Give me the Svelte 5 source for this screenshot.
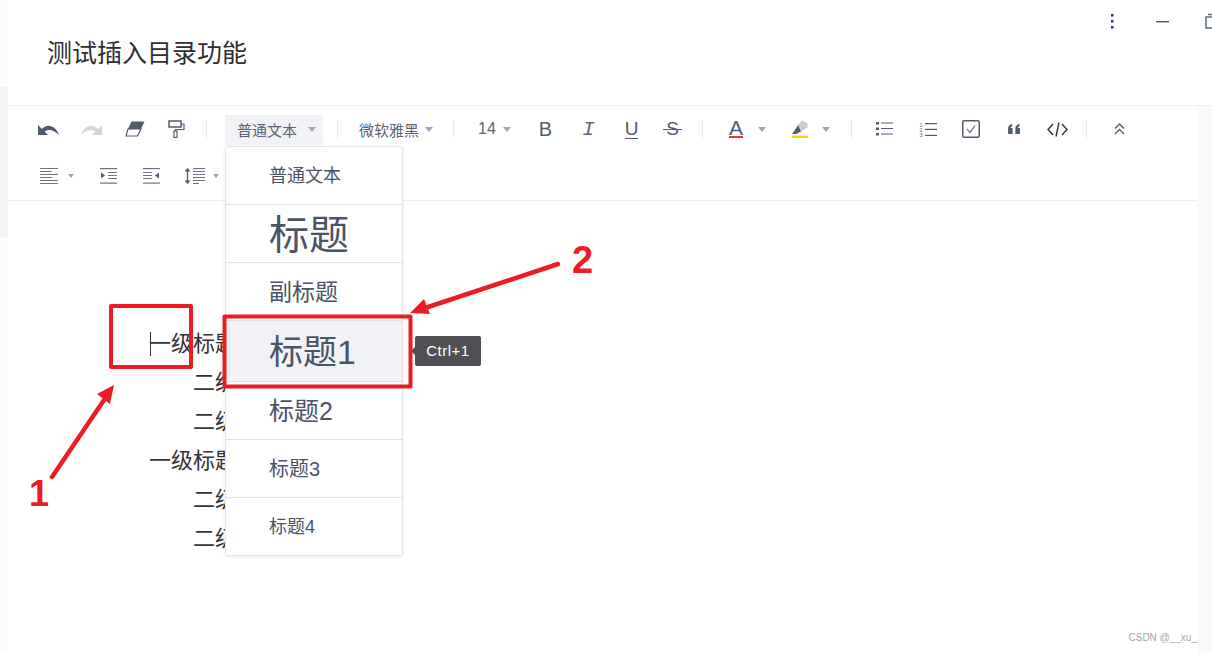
<script lang="ts">
  // 编辑器工具栏 + 段落样式下拉菜单
  const outline = [
    { text: "一级标题", child: false, caret: true },
    { text: "二级标题", child: true },
    { text: "二级标题", child: true },
    { text: "一级标题", child: false },
    { text: "二级标题", child: true },
    { text: "二级标题", child: true },
  ];

  const styles = [
    { label: "普通文本", cls: "s-body" },
    { label: "标题", cls: "s-title" },
    { label: "副标题", cls: "s-sub" },
    { label: "标题1", cls: "s-h1", active: true, tip: "Ctrl+1" },
    { label: "标题2", cls: "s-h2" },
    { label: "标题3", cls: "s-h3" },
    { label: "标题4", cls: "s-h4" },
  ];
</script>

<div class="page">
  <div class="rail-left">
    <div class="seg-a"></div>
    <div class="seg-b"></div>
    <div class="seg-c"></div>
  </div>

  <div class="main">
    <header class="head">
      <h1 class="doc-title">测试插入目录功能</h1>
      <div class="win-controls">
        <svg class="kebab" width="4" height="16" viewBox="0 0 4 16"><rect x="1" y="1" width="2.500" height="2.500" fill="#2b3566"/><rect x="1" y="7" width="2.500" height="2.500" fill="#2b3566"/><rect x="1" y="13" width="2.500" height="2.500" fill="#2b3566"/></svg>
        <svg class="minimize" width="13" height="2" viewBox="0 0 13 2"><rect width="13" height="1.400" fill="#4d5a70"/></svg>
        <svg class="restore" width="16" height="16" viewBox="0 0 16 16"><path d="M1 4h14v11H1zM3 1.500h10" fill="none" stroke="#5d6a80" stroke-width="1.500"/></svg>
      </div>
    </header>

    <div class="under">
      <div class="editor">
        <div class="toolbar">
          <div class="row row-top">
            <span class="tool">
              <svg width="21" height="11" viewBox="0 0 20 10.500"><path d="M0 1V10.500H9.500L6.200 7.200C9.500 4.800 14.500 4.800 20 10.500C17.500 3 10 -1.500 3.800 4.700Z" fill="#515a6e"/></svg>
            </span>
            <span class="tool">
              <svg width="21" height="11" viewBox="0 0 20 10.500"><path d="M20 1V10.500H10.500L13.800 7.200C10.500 4.800 5.500 4.800 0 10.500C2.500 3 10 -1.500 16.200 4.700Z" fill="#d4d5d8"/></svg>
            </span>
            <span class="tool">
              <svg width="20" height="16" viewBox="0 0 20 16"><path d="M6.500 0.500H19.500L16 8H3Z" fill="#515a6e"/><path d="M3 8H16L12.500 15H1Z" fill="none" stroke="#515a6e" stroke-width="1.200"/></svg>
            </span>
            <span class="tool paint">
              <svg width="17" height="18" viewBox="0 0 17 18"><rect x="1" y="1" width="12" height="6" fill="none" stroke="#515a6e" stroke-width="1.500"/><path d="M13 4H16V9.500H7.500V11" fill="none" stroke="#515a6e" stroke-width="1.200"/><rect x="6" y="11" width="3" height="6.500" fill="none" stroke="#515a6e" stroke-width="1.200"/></svg>
            </span>
            <i class="sep sep-a"></i>
            <span class="select">
              普通文本<i class="caret-down"></i>
              <div class="menu">
                {#each styles as s}
                  <div class="menu-item {s.cls}" class:active={s.active}>
                    {s.label}
                    {#if s.tip}<span class="tip">{s.tip}</span>{/if}
                  </div>
                {/each}
              </div>
            </span>
            <i class="sep sep-b"></i>
            <span class="font-pick">微软雅黑<i class="caret-down"></i></span>
            <i class="sep sep-c"></i>
            <span class="size-pick">14<i class="caret-down"></i></span>
            <span class="tool glyph first-format"><span class="g-b">B</span></span>
            <span class="tool glyph"><em class="g-i">I</em></span>
            <span class="tool glyph"><span class="g-u">U</span></span>
            <span class="tool glyph strike"><span class="g-s">S</span></span>
            <i class="sep sep-d"></i>
            <span class="color-pick"><span class="g-a">A</span><i class="caret-down"></i></span>
            <span class="marker-pick">
              <svg width="16" height="18" viewBox="0 0 16 18"><path d="M6 5L10 0.500L15.500 3V7.500L9 11.500Z" fill="#c9ccd3"/><path d="M6 5L9 11.500L4 14H0L3 10Z" fill="#515a6e"/><rect y="15.500" width="16" height="2.500" fill="#f5dc10"/></svg>
              <i class="caret-down"></i>
            </span>
            <i class="sep sep-e"></i>
            <span class="tool first-list">
              <svg width="17" height="14" viewBox="0 0 17 14"><g fill="#515a6e"><rect y="0" width="3" height="2.500"/><rect y="5.500" width="3" height="2.500"/><rect y="11" width="3" height="2.500"/><rect x="5" y="0.500" width="12" height="1"/><rect x="5" y="6" width="12" height="1"/><rect x="5" y="11.500" width="12" height="1"/></g></svg>
            </span>
            <span class="tool">
              <svg width="18" height="15" viewBox="0 0 18 15"><g fill="#515a6e"><rect x="6" y="1" width="12" height="1.200"/><rect x="6" y="6.800" width="12" height="1.200"/><rect x="6" y="12.800" width="12" height="1.200"/></g><g font-size="5.500" font-family="Liberation Sans, sans-serif" fill="#515a6e"><text x="0.500" y="4.500">1</text><text x="0.500" y="10">2</text><text x="0.500" y="15">3</text></g></svg>
            </span>
            <span class="tool">
              <svg width="18" height="18" viewBox="0 0 18 18"><rect x="0.750" y="0.750" width="16.500" height="16.500" rx="1.500" fill="none" stroke="#515a6e" stroke-width="1.500"/><path d="M5 9L8 12.500L13 5.500" fill="none" stroke="#515a6e" stroke-width="1.100"/></svg>
            </span>
            <span class="tool">
              <svg width="14" height="10" viewBox="0 0 14 11"><path d="M0.500 11V5C0.500 2.500 2 0.500 5 0V2.500C3.800 2.800 3.300 3.500 3.300 4.500H5.500V11ZM8.500 11V5C8.500 2.500 10 0.500 13 0V2.500C11.800 2.800 11.300 3.500 11.300 4.500H13.500V11Z" fill="#515a6e"/></svg>
            </span>
            <span class="tool code">
              <svg width="21" height="15" viewBox="0 0 21 15"><path d="M6 2L1 7.500L6 13M15 2L20 7.500L15 13M12 0.500L9 14.500" fill="none" stroke="#2d3340" stroke-width="1.400"/></svg>
            </span>
            <i class="sep sep-f"></i>
            <span class="tool last-up">
              <svg width="11" height="12" viewBox="0 0 11 12"><path d="M1 5.500L5.500 1L10 5.500M1 11L5.500 6.500L10 11" fill="none" stroke="#515a6e" stroke-width="1.400"/></svg>
            </span>
          </div>
          <div class="row">
            <span class="align-pick">
              <svg width="18" height="16" viewBox="0 0 18 16"><g fill="#6c7486"><rect width="18" height="1"/><rect y="3" width="12" height="1"/><rect y="6" width="18" height="1"/><rect y="9" width="12" height="1"/><rect y="12" width="18" height="1"/><rect y="15" width="18" height="1"/></g></svg>
              <i class="caret-down small"></i>
            </span>
            <span class="tool after-align">
              <svg width="17" height="16" viewBox="0 0 17 16"><g fill="#6c7486"><rect width="17" height="1.200"/><rect y="14.500" width="17" height="1.200"/><rect x="8" y="4" width="9" height="1"/><rect x="8" y="7" width="9" height="1"/><rect x="8" y="10" width="9" height="1"/></g><path d="M1 4.500L5 7.500L1 10.500Z" fill="#515a6e"/></svg>
            </span>
            <span class="tool">
              <svg width="17" height="16" viewBox="0 0 17 16"><g fill="#6c7486"><rect width="17" height="1.200"/><rect y="14.500" width="17" height="1.200"/><rect y="4" width="9" height="1"/><rect y="7" width="9" height="1"/><rect y="10" width="9" height="1"/></g><path d="M16 4.500L12 7.500L16 10.500Z" fill="#515a6e"/></svg>
            </span>
            <span class="line-pick">
              <svg width="21" height="18" viewBox="0 0 21 18"><path d="M3.500 2V16" stroke="#515a6e" stroke-width="1.300"/><path d="M0.500 4.500L3.500 1L6.500 4.500ZM0.500 13.500L3.500 17L6.500 13.500Z" fill="#515a6e"/><g fill="#6c7486"><rect x="9" y="1" width="12" height="1.200"/><rect x="9" y="4" width="12" height="1"/><rect x="9" y="7" width="12" height="1"/><rect x="9" y="10" width="12" height="1"/><rect x="9" y="13" width="12" height="1"/><rect x="9" y="16" width="6" height="1"/></g></svg>
              <i class="caret-down small"></i>
            </span>
          </div>
        </div>

        <div class="content">
          {#each outline as item}
            <p class="line" class:child={item.child}>
              {#if item.caret}<i class="text-caret"></i>{/if}{item.text}
            </p>
          {/each}
        </div>
      </div>
      <div class="rail-right"></div>
    </div>
  </div>

  <!-- 红色标注 -->
  <svg class="marks" width="1212" height="653" viewBox="0 0 1212 653">
    <g fill="none" stroke="#ed1c24" stroke-linejoin="round">
      <rect x="111" y="306" width="80" height="61" stroke-width="4"/>
      <rect x="224.500" y="316.500" width="186" height="70" stroke-width="4"/>
      <path d="M52 477L104 400M558 264L428 307" stroke-width="4.500" stroke-linecap="round"/>
    </g>
    <path d="M114 385L97 394L110 404ZM410 313L424 299L430 314Z" fill="#ed1c24"/>
    <text x="29" y="506" class="num num-one">1</text>
    <text x="572" y="273" class="num">2</text>
  </svg>

  <span class="watermark">CSDN @__xu_</span>
</div>

<style>
  :global(body) {
    margin: 0;
    background: #fff;
  }

  .page {
    position: relative;
    display: flex;
    width: 1212px;
    height: 653px;
    overflow: hidden;
    font-family: "Liberation Sans", "Noto Sans CJK SC", sans-serif;
    color: #4a5466;
  }

  .rail-left {
    width: 8px;
    flex: none;
    display: flex;
    flex-direction: column;
  }
  .seg-a { height: 87px; background: #fcfcfc; }
  .seg-b { height: 150px; background: #f3f3f3; }
  .seg-c { flex: 1; background: #fcfcfc; }

  .main {
    flex: 1;
    display: flex;
    flex-direction: column;
    min-width: 0;
  }

  .head {
    height: 105px;
    flex: none;
    display: flex;
    justify-content: space-between;
    border-bottom: 1px solid #eeeeee;
  }

  .doc-title {
    margin: 36px 0 0 39px;
    font-size: 25px;
    line-height: 34px;
    font-weight: 400;
    color: #2f2f2f;
  }

  .win-controls {
    display: flex;
    align-items: flex-start;
    margin-right: -9px;
    padding-top: 13px;
  }
  .kebab { margin-right: 42px; }
  .minimize { margin-top: 8px; margin-right: 36px; }

  .under {
    flex: 1;
    display: flex;
    min-height: 0;
  }

  .editor {
    flex: 1;
    min-width: 0;
    display: flex;
    flex-direction: column;
  }

  .rail-right {
    width: 15px;
    flex: none;
    background: #fafafa;
  }

  .toolbar {
    height: 94px;
    flex: none;
    padding-left: 19px;
    border-bottom: 1px solid #eeeeee;
  }

  .row {
    display: flex;
    align-items: center;
    height: 47px;
    font-size: 15px;
  }
  .row-top { height: 46px; }

  .tool {
    width: 43px;
    height: 30px;
    flex: none;
    display: flex;
    align-items: center;
    justify-content: center;
  }
  .paint svg { margin-left: -2px; }
  .code svg { margin-left: 2px; }

  .sep {
    width: 1px;
    height: 18px;
    flex: none;
    background: #e8e8e8;
  }
  .sep-a { margin: 0 18px 0 7px; }
  .sep-b { margin: 0 21px 0 14px; }
  .sep-c { margin: 0 24px 0 20px; }
  .sep-d { margin: 0 26px 0 8px; }
  .sep-e { margin: 0 0 0 21px; }
  .sep-f { margin: 0 0 0 8px; }

  .caret-down {
    display: inline-block;
    width: 0;
    height: 0;
    border-left: 4px solid transparent;
    border-right: 4px solid transparent;
    border-top: 5px solid #a0a5b0;
  }
  .caret-down.small {
    border-left-width: 3.500px;
    border-right-width: 3.500px;
    border-top-width: 4px;
  }

  .select {
    position: relative;
    width: 98px;
    height: 30px;
    flex: none;
    margin-top: 2px;
    box-sizing: border-box;
    padding: 0 0 2px 12px;
    display: flex;
    align-items: center;
    background: #f0f2f5;
    color: #5a6375;
  }
  .select > .caret-down { margin-left: 11px; }

  .font-pick {
    width: 74px;
    flex: none;
    display: flex;
    align-items: center;
    justify-content: space-between;
    color: #5a6375;
  }

  .size-pick {
    width: 33px;
    flex: none;
    display: flex;
    align-items: center;
    justify-content: space-between;
    font-size: 16px;
    color: #5a6375;
  }

  .first-format { margin-left: 13px; }
  .first-list { margin-left: 11px; }
  .last-up { margin-left: 11px; }

  .g-b {
    font-size: 20px;
    color: #515a6e;
  }
  .g-i {
    font-family: "Liberation Mono", monospace;
    font-size: 21px;
    color: #5f677a;
  }
  .g-u {
    font-size: 19px;
    line-height: 19px;
    color: #515a6e;
    border-bottom: 1px solid #515a6e;
  }
  .strike {
    position: relative;
    left: -2px;
    margin-right: -2px;
  }
  .g-s {
    position: relative;
    font-size: 19px;
    color: #515a6e;
  }
  .g-s::after {
    content: "";
    position: absolute;
    left: -3px;
    right: -3px;
    top: 50%;
    height: 1px;
    background: #515a6e;
  }

  .color-pick {
    width: 37px;
    flex: none;
    display: flex;
    align-items: center;
    justify-content: space-between;
  }
  .g-a {
    width: 14px;
    font-size: 21px;
    line-height: 16px;
    text-align: center;
    color: #515a6e;
    border-bottom: 2.500px solid #e53a2a;
  }

  .marker-pick {
    width: 38px;
    margin-left: 26px;
    flex: none;
    display: flex;
    align-items: center;
    justify-content: space-between;
  }

  .align-pick {
    width: 34px;
    margin-left: 13px;
    flex: none;
    display: flex;
    align-items: center;
    justify-content: space-between;
  }
  .after-align { margin-left: 13px; }

  .line-pick {
    width: 35px;
    margin-left: 11px;
    flex: none;
    display: flex;
    align-items: center;
    justify-content: space-between;
  }

  .menu {
    position: absolute;
    top: 31px;
    left: 0;
    z-index: 5;
    width: 176px;
    background: #fff;
    border: 1px solid #e4e5ea;
    border-radius: 3px;
    box-shadow: 0 1px 4px rgba(0, 0, 0, 0.08);
  }

  .menu-item {
    position: relative;
    height: 54px;
    padding-bottom: 3px;
    display: flex;
    align-items: center;
    padding-left: 43px;
    color: #4a5466;
    border-bottom: 1px solid #e0e1e6;
  }
  .menu-item:last-child { border-bottom: 0; }
  .menu-item.active {
    height: 56px;
    padding-bottom: 4px;
    background: #f0f2f5;
  }

  .s-body { font-size: 18px; }
  .s-title { font-size: 40px; }
  .s-sub { font-size: 23px; }
  .s-h1 { font-size: 34px; }
  .s-h2 { font-size: 25px; }
  .s-h3 { font-size: 20px; }
  .s-h4 { font-size: 18px; }

  .tip {
    position: absolute;
    left: 189px;
    top: 15px;
    width: 66px;
    height: 29px;
    padding-bottom: 1px;
    display: flex;
    align-items: center;
    justify-content: center;
    font-size: 15px;
    letter-spacing: 0.5px;
    color: #fff;
    background: #505054;
    border-radius: 2px;
  }
  .tip::before {
    content: "";
    position: absolute;
    left: -4px;
    top: 11px;
    border-top: 4px solid transparent;
    border-bottom: 4px solid transparent;
    border-right: 4px solid #505054;
  }

  .content {
    flex: 1;
    padding: 123px 0 0 141px;
  }

  .line {
    position: relative;
    margin: 0;
    height: 39px;
    line-height: 39px;
    font-size: 22px;
    color: #333;
    white-space: nowrap;
  }
  .line.child { padding-left: 44px; }

  .text-caret {
    position: absolute;
    left: 1px;
    top: 8px;
    width: 1px;
    height: 24px;
    background: #333;
  }

  .marks {
    position: absolute;
    inset: 0;
    z-index: 10;
    pointer-events: none;
  }
  .num {
    font-family: "Liberation Sans", sans-serif;
    font-size: 38px;
    font-weight: 700;
    fill: #ed1c24;
  }
  .num-one { font-size: 36px; }

  .watermark {
    position: absolute;
    right: 15px;
    bottom: 9px;
    font-size: 10px;
    line-height: 12px;
    color: #a6a6a6;
  }
</style>
